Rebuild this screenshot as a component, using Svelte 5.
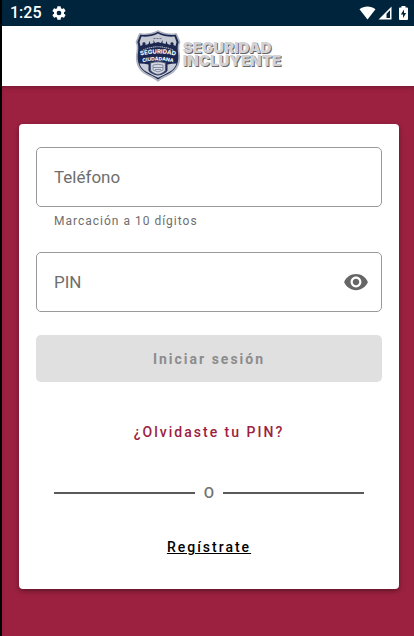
<script>
  let phone = $state('');
  let pin = $state('');
  let showPin = $state(false);
  const ready = $derived(phone.length === 10 && pin.length > 0);
</script>

<div class="screen">
  <div class="status">
    <span class="time">1:25</span>
    <svg class="gear" width="16" height="16" viewBox="0 0 24 24" aria-hidden="true">
      <path fill="#fff" d="M19.4 13a7.500 7.500 0 0 0 0-2l2.200-1.700a.5.5 0 0 0 .1-.6l-2-3.500a.5.5 0 0 0-.6-.2l-2.500 1a7.300 7.300 0 0 0-1.700-1l-.4-2.600a.5.5 0 0 0-.5-.4h-4a.5.5 0 0 0-.5.400l-.4 2.600a7.300 7.300 0 0 0-1.700 1l-2.500-1a.5.5 0 0 0-.6.200l-2 3.500a.5.5 0 0 0 .1.600L4.600 11a7.500 7.500 0 0 0 0 2l-2.200 1.700a.5.5 0 0 0-.1.600l2 3.500c.1.200.4.300.6.200l2.500-1a7.300 7.300 0 0 0 1.700 1l.4 2.600c0 .2.200.4.500.4h4c.3 0 .5-.2.500-.4l.4-2.600a7.300 7.300 0 0 0 1.700-1l2.500 1c.2.100.5 0 .6-.2l2-3.500a.5.5 0 0 0-.1-.6zM12 15.500a3.500 3.500 0 1 1 0-7 3.500 3.500 0 0 1 0 7z" />
    </svg>
    <span class="spacer"></span>
    <svg width="17" height="14" viewBox="0 0 17 14" aria-hidden="true">
      <path fill="#fff" d="M0.500 3.300C5.200-.4 11.800-.4 16.500 3.300L8.500 13.500z" />
    </svg>
    <svg width="14" height="14" viewBox="0 0 14 14" aria-hidden="true">
      <path fill="#fff" fill-rule="evenodd" d="M13.500.5v13H.5zM12 4.300L8.500 7.800V12H12z" />
    </svg>
    <svg class="battery" width="9" height="14" viewBox="0 0 9 14" aria-hidden="true">
      <path fill="#fff" d="M2.500 0h4v1.500H8q1 0 1 1V13q0 1-1 1H1q-1 0-1-1V2.500q0-1 1-1h1.500z" />
      <path fill="#00243c" d="M5 3.500L1.800 8.500H4V12l3.200-5H5z" />
    </svg>
  </div>

  <header>
    <svg class="shield" width="46" height="52" viewBox="0 0 46 52" aria-hidden="true">
      <path fill="#b8bdc9" stroke="#8c92a4" stroke-width=".6" d="M23 .5C18 3.500 11 4.800 4.500 3.500L1 12c2 4 1 8 .5 13-.7 9 2.500 15 8 18.500 5 3 10 4.500 13.500 8 3.500-3.500 8.500-5 13.500-8 5.500-3.500 8.700-9.500 8-18.500-.5-5-1.500-9 .5-13l-3.500-8.500C35 4.800 28 3.500 23 .5z" />
      <path fill="#1c2752" d="M23 1.800C18 4.700 11 5.700 5.200 4.800L2.300 12c1.700 4 .9 8 .4 13-.6 8 2.400 14 7.500 17.200 4.500 2.800 9.300 4.200 12.800 7.400 3.500-3.200 8.300-4.600 12.800-7.400 5.100-3.200 8.100-9.200 7.500-17.200-.5-5-1.300-9 .4-13l-2.900-7.200C35 5.700 28 4.700 23 1.800z" />
      <path fill="#c5c9d3" d="M23 3.500C18 6.300 11 7 6.500 6.500l-2 5.500 1 4 2-1v-2l1.500-1 1.500 1v2l3-1 1-3 1 3 3-1v-3l1.500 3 3-1 3 1 1.500-3v3l3 1 1-3 1 3 3 1v-2l1.500-1 1.500 1v2l2 1 1-4-2-5.500C35 7 28 6.300 23 3.500z" />
      <path fill="none" stroke="#5d6682" stroke-width=".9" stroke-dasharray="2 1" d="M18.500 8.500h9" />
      <path fill="none" stroke="#a9b0c1" stroke-width="1.100" stroke-dasharray="1.500 .6" d="M8 20Q23 13.500 38 20" />
      <path id="ring" fill="none" d="M2 26.500Q23 20.500 44 26.500" />
      <path id="ring-low" fill="none" d="M5 33Q23 28 41 33" />
      <g fill="#f5f6fa" font-family="Inter, sans-serif" font-weight="800" text-anchor="middle">
        <text font-size="6"><textPath href="#ring" startOffset="50%">SEGURIDAD</textPath></text>
        <text font-size="5"><textPath href="#ring-low" startOffset="50%">CIUDADANA</textPath></text>
      </g>
      <path fill="#c9cdd7" d="M4.500 33.500q5 0 9 1v6q2 3.500 9.500 5 7.500-1.500 9.500-5v-6q4-1 9-1-1.500 5-6.500 8-5 3-12 6.200-7-3.200-12-6.200-5-3-6.500-8z" />
      <path fill="#d6d9e2" stroke="#4f5877" stroke-width="1.200" d="M15.500 33q7.500-2.500 15 0v7.500q-2 3-7.500 4-5.500-1-7.500-4z" />
      <path fill="none" stroke="#858da4" d="M18 35q5-1.500 10 0v5l-5 2-5-2zM18 37.500h10M20 39.500h6" />
    </svg>
    <div class="brand"><span>SEGURIDAD</span><span>INCLUYENTE</span></div>
  </header>

  <main>
    <form class="card" onsubmit={(e) => e.preventDefault()}>
      <input type="tel" class="field" aria-label="Teléfono" aria-describedby="phone-help" placeholder="Teléfono" maxlength="10" bind:value={phone} />
      <p id="phone-help">Marcación a 10 dígitos</p>

      <div class="field pin">
        <input type={showPin ? 'text' : 'password'} aria-label="PIN" placeholder="PIN" bind:value={pin} />
        <button type="button" class="eye" aria-label="Mostrar PIN" onclick={() => (showPin = !showPin)}>
          <svg width="26" height="26" viewBox="0 0 24 24" aria-hidden="true">
            <path fill="#666" d="M12 4.500C7 4.500 2.730 7.610 1 12c1.730 4.390 6 7.500 11 7.500s9.270-3.110 11-7.500c-1.730-4.390-6-7.500-11-7.500zM12 17c-2.760 0-5-2.240-5-5s2.240-5 5-5 5 2.240 5 5-2.240 5-5 5zm0-8c-1.660 0-3 1.340-3 3s1.340 3 3 3 3-1.340 3-3-1.340-3-3-3z" />
          </svg>
        </button>
      </div>

      <button type="submit" class="login" disabled={!ready}>Iniciar sesión</button>
      <a class="forgot" href="#recuperar">¿Olvidaste tu PIN?</a>
      <div class="divider"><span>O</span></div>
      <a class="register" href="#registro">Regístrate</a>
    </form>
  </main>
</div>

<style>
  :global(body) { margin: 0; background: #9c2141; }
  .screen {
    box-sizing: border-box;
    min-height: 100vh;
    display: flex;
    flex-direction: column;
    border-left: 2px solid #000;
    font-family: Roboto, "Liberation Sans", sans-serif;
    background: #9c2141;
  }
  .status {
    display: flex;
    align-items: center;
    gap: 2px;
    height: 26px;
    padding: 0 6px 0 8px;
    background: #00243c;
    color: #fff;
  }
  .time { font-size: 16px; line-height: 26px; font-weight: 500; }
  .gear { margin-left: 7px; }
  .spacer { flex: 1; }
  .battery { margin-left: 5px; }
  header {
    display: flex;
    align-items: center;
    justify-content: center;
    gap: 2px;
    height: 60px;
    background: #fff;
  }
  .brand {
    display: flex;
    flex-direction: column;
    padding-bottom: 4px;
    font-family: Inter, "Liberation Sans", sans-serif;
    font-size: 15px;
    line-height: 13px;
    font-weight: 900;
    color: #d2d2d4;
    text-shadow: 1px 1px 0 #67676b;
  }
  main {
    flex: 1;
    padding: 38px 15px 46px 17px;
    box-shadow: inset 0 4px 5px -3px #6f1830;
  }
  .card {
    display: flex;
    flex-direction: column;
    padding: 23px 17px 32px;
    border-radius: 4px;
    background: #fff;
    box-shadow: 0 2px 5px rgba(0, 0, 0, 0.4);
  }
  input { font-family: inherit; font-size: 17px; color: #222; }
  input::placeholder { color: #6e6e6e; opacity: 1; }
  .field {
    box-sizing: border-box;
    width: 100%;
    height: 60px;
    padding: 0 17px;
    border: 1px solid #999;
    border-radius: 5px;
    background: #fff;
  }
  .card p {
    margin: 4px 18px 21px;
    font-size: 12px;
    line-height: 20px;
    letter-spacing: 1px;
    color: #6e6e6e;
  }
  .pin { display: flex; align-items: center; padding-right: 12px; }
  .pin input {
    flex: 1;
    min-width: 0;
    padding: 0;
    border: 0;
    outline: 0;
    background: none;
  }
  button { border: 0; font-family: inherit; cursor: pointer; }
  .eye { display: flex; padding: 0; background: none; }
  .login {
    height: 47px;
    margin-top: 23px;
    border-radius: 5px;
    background: #9c2141;
    color: #fff;
    font-size: 14px;
    font-weight: 700;
    letter-spacing: 2px;
  }
  .login:disabled { background: #e0e0e0; color: #8c8c8c; cursor: default; }
  .forgot, .register {
    align-self: center;
    font-size: 14px;
    line-height: 20px;
    font-weight: 500;
    letter-spacing: 2px;
  }
  .forgot { margin-top: 40px; color: #9c2141; text-decoration: none; }
  .divider {
    display: flex;
    align-items: center;
    gap: 9px;
    margin: 41px 18px 34px;
    font-size: 15px;
    line-height: 20px;
    font-weight: 500;
    color: #737373;
  }
  .divider::before, .divider::after {
    content: "";
    flex: 1;
    height: 2px;
    background: #5a5a5a;
  }
  .register { color: #000; text-decoration: underline; }
</style>
